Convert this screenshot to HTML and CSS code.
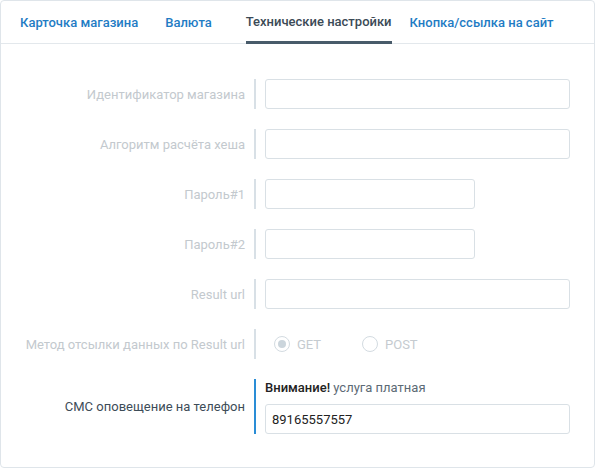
FILE: index.html
```
<!DOCTYPE html>
<html lang="ru">
<head>
  <meta charset="UTF-8">
  <meta name="viewport" content="width=device-width, initial-scale=1.0">
  <title>Технические настройки</title>
  <link rel="stylesheet" href="styles.css">
</head>
<body>
  <div class="card">
    <ul class="tabs">
      <li><a href="#">Карточка магазина</a></li>
      <li><a href="#">Валюта</a></li>
      <li class="active"><a href="#">Технические настройки</a></li>
      <li><a href="#">Кнопка/ссылка на сайт</a></li>
    </ul>

    <form class="settings">
      <div class="row disabled">
        <label class="label">Идентификатор магазина</label>
        <div class="field"><input type="text" class="input" disabled></div>
      </div>
      <div class="row disabled">
        <label class="label">Алгоритм расчёта хеша</label>
        <div class="field"><input type="text" class="input" disabled></div>
      </div>
      <div class="row disabled">
        <label class="label">Пароль#1</label>
        <div class="field"><input type="text" class="input short" disabled></div>
      </div>
      <div class="row disabled">
        <label class="label">Пароль#2</label>
        <div class="field"><input type="text" class="input short" disabled></div>
      </div>
      <div class="row disabled">
        <label class="label">Result url</label>
        <div class="field"><input type="text" class="input" disabled></div>
      </div>
      <div class="row disabled">
        <label class="label">Метод отсылки данных по Result url</label>
        <div class="field radios">
          <span class="radio checked"><i></i>GET</span>
          <span class="radio"><i></i>POST</span>
        </div>
      </div>
      <div class="row active">
        <label class="label">СМС оповещение на телефон</label>
        <div class="field">
          <p class="note"><b>Внимание!</b> услуга платная</p>
          <input type="text" class="input" value="89165557557">
        </div>
      </div>
    </form>
  </div>
</body>
</html>
```

FILE: styles.css
```
body {
  margin: 0;
  font-family: Roboto, "Liberation Sans", sans-serif;
  background: #fff;
}
.card {
  width: 593px;
  height: 466px;
  border: 1px solid #dfe5ea;
  border-radius: 4px;
  background: #fff;
}
.tabs {
  display: flex;
  list-style: none;
  margin: 0;
  padding: 0 0 0 19px;
  height: 42px;
  border-bottom: 1px solid #e3e8ec;
  white-space: nowrap;
}
.tabs li {
  flex: none;
  margin-right: 27px;
}
.tabs a {
  display: block;
  line-height: 43px;
  font-size: 13px;
  font-weight: 500;
  color: #1f7cc4;
  text-decoration: none;
}
.tabs li.active a {
  color: #3b4a56;
  border-bottom: 3px solid #485b6a;
  line-height: 42px;
  height: 40px;
}
.tabs li:nth-child(2) {
  margin-right: 34px;
}
.tabs li:nth-child(3) {
  margin-right: 18px;
}
.settings {
  padding-top: 35px;
}
.row {
  display: flex;
  align-items: center;
  margin-bottom: 20px;
}
.label {
  flex: none;
  width: 253px;
  box-sizing: border-box;
  padding-right: 9px;
  text-align: right;
  font-size: 13px;
  color: #3d4c58;
}
.row.disabled .label {
  color: #c3c9ce;
}
.field {
  border-left: 2px solid #d8e0e6;
  padding-left: 9px;
  min-height: 30px;
}
.row.active .field {
  border-left-color: #2a8dd6;
}
.input {
  display: block;
  width: 305px;
  height: 30px;
  box-sizing: border-box;
  border: 1px solid #d9e0e5;
  border-radius: 3px;
  background: #fff;
  padding: 0 6px;
  font-family: inherit;
  font-size: 13px;
  color: #222;
}
.input.short {
  width: 210px;
}
.note {
  margin: 0 0 8px;
  font-size: 13px;
  line-height: 17px;
  color: #5c6a75;
}
.note b {
  font-weight: 500;
  color: #222;
}
.radios {
  display: flex;
  align-items: center;
}
.radio {
  display: flex;
  align-items: center;
  font-size: 13px;
  color: #c5cbd0;
  margin-left: 9px;
  width: 79px;
}
.radio i {
  width: 16px;
  height: 16px;
  box-sizing: border-box;
  border: 1px solid #d3dbe1;
  border-radius: 50%;
  margin-right: 7px;
  position: relative;
}
.radio.checked i::after {
  content: "";
  position: absolute;
  left: 3px;
  top: 3px;
  width: 8px;
  height: 8px;
  border-radius: 50%;
  background: #cbd5dc;
}
```
